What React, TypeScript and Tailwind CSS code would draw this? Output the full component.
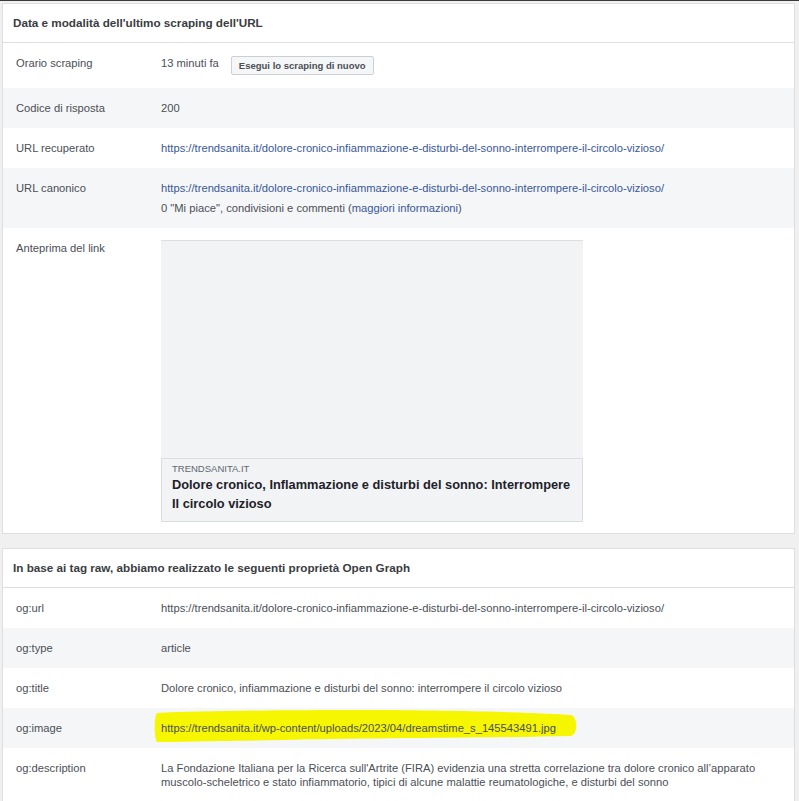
import type { ReactNode } from 'react';

const URL_ART =
  'https://trendsanita.it/dolore-cronico-infiammazione-e-disturbi-del-sonno-interrompere-il-circolo-vizioso/';

interface RowProps {
  label: string;
  gray?: boolean;
  children: ReactNode;
  valueClass?: string;
}

function Row({ label, gray, children, valueClass }: RowProps) {
  return (
    <div className={gray ? 'flex bg-[#f5f6f7]' : 'flex bg-white'}>
      <div className="w-[158px] shrink-0 pl-[13px] py-[13px]">{label}</div>
      <div className={valueClass ?? 'flex-1 min-w-0 py-[13px] pr-[12px]'}>{children}</div>
    </div>
  );
}

function CardHeader({ title }: { title: string }) {
  return (
    <div className="h-[39px] flex items-center px-[10px] border-b border-[#dddfe2] font-bold text-[11.7px] text-[#3a3d42]">
      {title}
    </div>
  );
}

function LinkPreview() {
  return (
    <div className="w-[422px]">
      <div className="h-[218px] bg-[#f2f3f5] border-t border-[#dddfe2]" />
      <div className="border border-[#dadde1] bg-[#f2f3f5] px-[10px] pt-[4px] pb-[8px]">
        <div className="text-[9.5px] leading-[12px] text-[#606770]">TRENDSANITA.IT</div>
        <div className="text-[12.8px] leading-[19px] font-bold text-[#1d2129]">
          Dolore cronico, Inflammazione e disturbi del sonno: Interrompere Il circolo vizioso
        </div>
      </div>
    </div>
  );
}

function Highlight() {
  // yellow marker stroke drawn over the screenshot
  return (
    <svg
      className="absolute -left-[8px] top-0 pointer-events-none"
      width="430"
      height="40"
      viewBox="0 0 430 40"
    >
      <path
        transform="translate(8 0)"
        d="M -4 5 C 40 3, 120 2, 200 2 C 300 2, 380 5, 410 7 C 417 9, 417 26, 410 28 C 330 30, 200 30, 120 32 C 60 33, 10 34, -4 34 C -7 30, -7 8, -4 5 Z"
        fill="#f6f600"
      />
    </svg>
  );
}

export default function App() {
  return (
    <div className="min-h-[801px] bg-[#f0f0f0] font-['Liberation_Sans',Arial,sans-serif] text-[11.2px] leading-[14px] text-[#4b4f56]">
      <div className="h-[1px] bg-[#3a3a3a]" />

      <div className="mt-[2px] ml-[2px] mr-[4px] bg-white border border-[#dddfe2]">
        <CardHeader title="Data e modalità dell'ultimo scraping dell'URL" />
        <Row label="Orario scraping">
          <div className="flex items-start gap-[12px]">
            <span>13 minuti fa</span>
            <button className="h-[19px] px-[7px] border border-[#ccd0d5] rounded-[2px] bg-[#f5f6f7] text-[9.5px] font-bold text-[#4b4f56] leading-none">
              Esegui lo scraping di nuovo
            </button>
          </div>
        </Row>
        <Row label="Codice di risposta" gray>
          200
        </Row>
        <Row label="URL recuperato">
          <a className="text-[#385898]">{URL_ART}</a>
        </Row>
        <Row label="URL canonico" gray>
          <a className="text-[#385898]">{URL_ART}</a>
          <div className="mt-[6px]">
            0 "Mi piace", condivisioni e commenti (<a className="text-[#385898]">maggiori informazioni</a>)
          </div>
        </Row>
        <Row label="Anteprima del link" valueClass="flex-1 pt-[12px] pb-[11px]">
          <LinkPreview />
        </Row>
      </div>

      <div className="mt-[14px] ml-[2px] mr-[4px] bg-white border border-[#dddfe2]">
        <CardHeader title="In base ai tag raw, abbiamo realizzato le seguenti proprietà Open Graph" />
        <Row label="og:url">{URL_ART}</Row>
        <Row label="og:type" gray>
          article
        </Row>
        <Row label="og:title">Dolore cronico, infiammazione e disturbi del sonno: interrompere il circolo vizioso</Row>
        <Row label="og:image" gray valueClass="relative flex-1 py-[13px] pr-[12px]">
          <Highlight />
          <span className="relative">
            https://trendsanita.it/wp-content/uploads/2023/04/dreamstime_s_145543491.jpg
          </span>
        </Row>
        <Row label="og:description">
          La Fondazione Italiana per la Ricerca sull'Artrite (FIRA) evidenzia una stretta correlazione tra dolore
          cronico all’apparato muscolo-scheletrico e stato infiammatorio, tipici di alcune malattie reumatologiche, e
          disturbi del sonno
        </Row>
      </div>
    </div>
  );
}
